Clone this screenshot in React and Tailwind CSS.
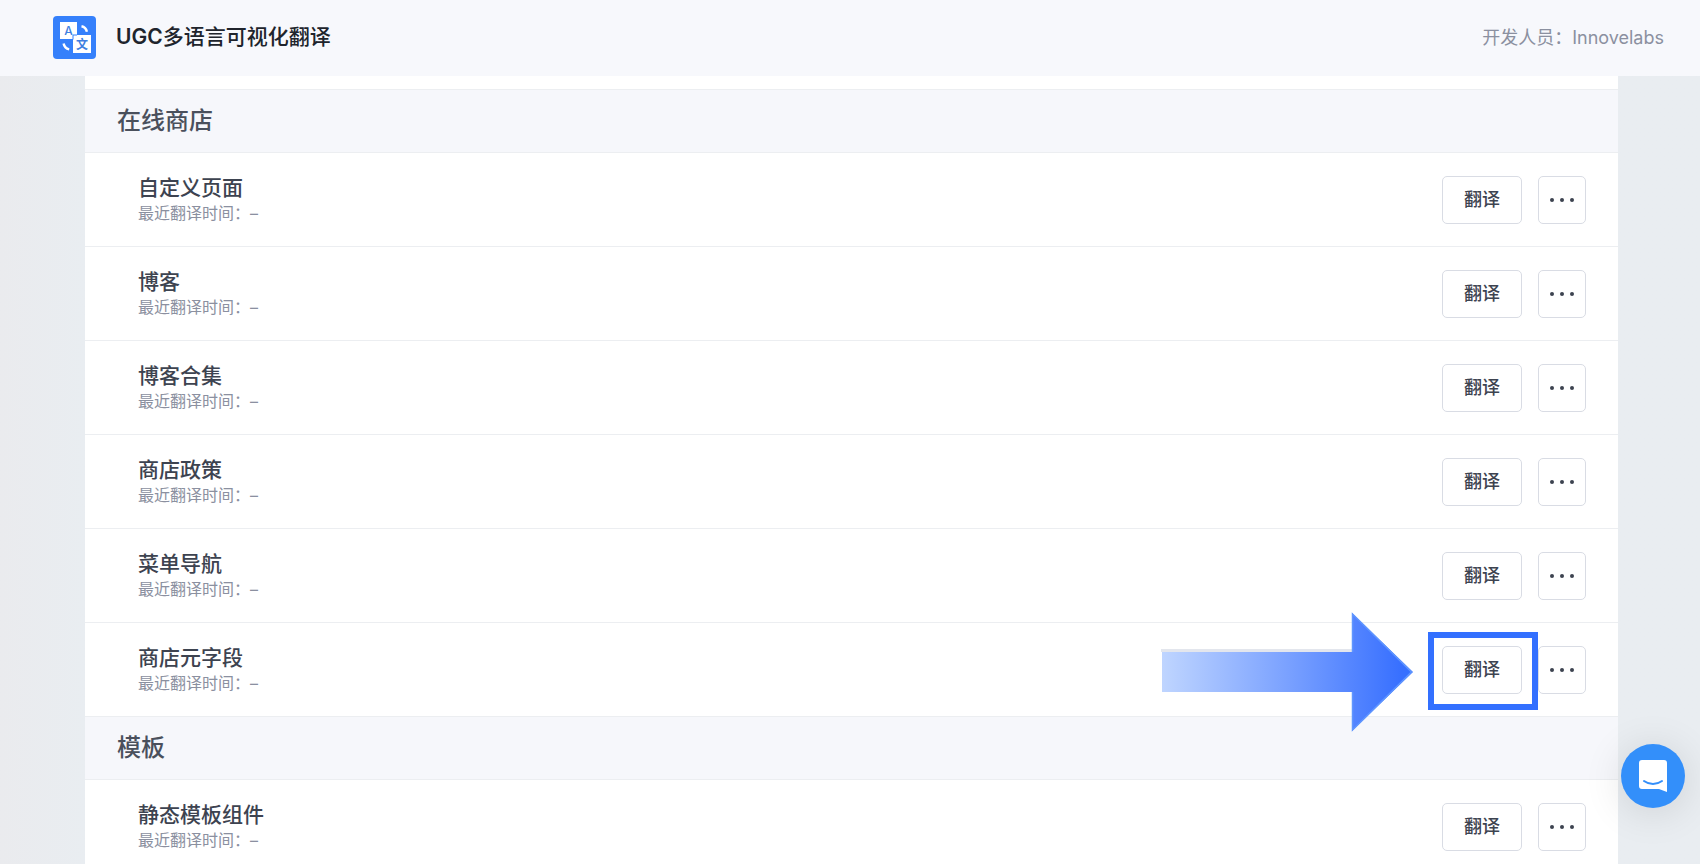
// UGC 多语言可视化翻译：资源列表页
import React from 'react'

const SECTIONS = [
  {
    id: 'store',
    title: '在线商店',
    items: [
      { id: 'page', name: '自定义页面' },
      { id: 'blog', name: '博客' },
      { id: 'blog-collection', name: '博客合集' },
      { id: 'policy', name: '商店政策' },
      { id: 'menu', name: '菜单导航' },
      { id: 'metafield', name: '商店元字段', highlighted: true },
    ],
  },
  {
    id: 'template',
    title: '模板',
    items: [{ id: 'static', name: '静态模板组件' }],
  },
]

function Logo() {
  return (
    <svg className="h-[43px] w-[43px] shrink-0" viewBox="0 0 43 43" aria-hidden="true">
      <rect width="43" height="43" rx="4" fill="#3580fb" />
      <rect x="7" y="6" width="17" height="17" fill="#fff" />
      <rect x="20" y="19" width="18" height="18" fill="#fff" />
      <path d="M20 23.5V19h4" fill="none" stroke="#3580fb" strokeWidth="1" />
      <text x="15.5" y="19" textAnchor="middle" fontSize="12" fontWeight="500" fill="#3f7fe0">A</text>
      <text x="29" y="32.5" textAnchor="middle" fontSize="12" fontWeight="700" fill="#3f7fe0">文</text>
      <path d="M28.5 10.2c3 .6 4.8 2.6 5.4 5.6" fill="none" stroke="#fff" strokeWidth="2.4" />
      <path d="M10.6 27.5c.6 3.2 2.4 5.2 5.6 5.9" fill="none" stroke="#fff" strokeWidth="2.4" />
    </svg>
  )
}

// 引导箭头 + 高亮框
function Highlight() {
  return (
    <>
      <svg className="pointer-events-none absolute -top-[34px] right-[109px] z-10 h-[120px] w-[252px]" viewBox="0 0 252 120" aria-hidden="true">
        <defs>
          <linearGradient id="arrow" x1="0" y1="0" x2="1" y2="0">
            <stop offset="0" stopColor="#bfd5ff" />
            <stop offset="0.5" stopColor="#7aa1ff" />
            <stop offset="0.95" stopColor="#3870ff" />
            <stop offset="1" stopColor="#3370ff" />
          </linearGradient>
        </defs>
        <path d="M0 38.5h191" stroke="#e3e6ed" strokeWidth="3" />
        <path d="M1 40h190V1l61 59-61 59V80H1z" fill="url(#arrow)" />
        <path d="M191.5 40V2l59 58-59 58V80" fill="none" stroke="#5f96ff" strokeWidth="1.5" />
      </svg>
      <span className="pointer-events-none absolute -top-3.5 -right-4 -bottom-4 -left-3.5 z-10 border-6 border-[#3370ff]" />
    </>
  )
}

function ItemRow({ item }) {
  return (
    <li className="flex h-[94px] items-center justify-between border-b border-[#eceef1] pr-8 pl-[53px]">
      <div className="pb-0.5">
        <h3 className="text-[21px] leading-7 font-medium text-[#3d4350]">{item.name}</h3>
        <p className="text-base leading-[22px] text-[#8b90a0]">最近翻译时间：–</p>
      </div>
      <div className="flex gap-4">
        <div className="relative">
          <button type="button" className="h-12 w-20 rounded-[5px] border border-[#d9dce4] bg-white text-[18px] font-medium text-[#3d4350]">
            翻译
          </button>
          {item.highlighted && <Highlight />}
        </div>
        <button type="button" aria-label="更多操作" className="flex h-12 w-12 items-center justify-center gap-1.5 rounded-[5px] border border-[#d9dce4] bg-white">
          <i className="h-1 w-1 rounded-full bg-[#3d4350]" />
          <i className="h-1 w-1 rounded-full bg-[#3d4350]" />
          <i className="h-1 w-1 rounded-full bg-[#3d4350]" />
        </button>
      </div>
    </li>
  )
}

export default function App() {
  return (
    <div className="flex h-screen flex-col overflow-hidden bg-[#e9ecf1] font-['Inter','Noto_Sans_CJK_SC',sans-serif]">
      <header className="flex h-[76px] shrink-0 items-center justify-between bg-[#f7f8fc] pr-9 pb-0.5 pl-[53px]">
        <div className="flex items-center gap-5">
          <Logo />
          <h1 className="text-[21px] font-medium text-[#20242c]">
            <span className="font-semibold">UGC</span>多语言可视化翻译
          </h1>
        </div>
        <p className="text-[18px] text-[#8b90a0]">开发人员：Innovelabs</p>
      </header>

      <div className="min-h-0 flex-1 overflow-hidden bg-linear-to-r from-[#eaebee] to-[#e9edf1] to-5% pr-[82px] pl-[85px]">
        <main className="min-h-full bg-white pt-[13px]">
          <div className="border-t border-[#eceef1]">
            {SECTIONS.map(s => (
              <section key={s.id}>
                <h2 className="flex h-[63px] items-center border-b border-[#eceef1] bg-[#f6f7fb] px-8 text-[24px] font-medium text-[#4a505c]">
                  {s.title}
                </h2>
                <ul>
                  {s.items.map(item => <ItemRow key={item.id} item={item} />)}
                </ul>
              </section>
            ))}
          </div>
        </main>
      </div>

      <button type="button" aria-label="在线客服" className="fixed right-[15px] bottom-14 flex h-16 w-16 items-center justify-center rounded-full bg-[#338ffa] shadow-[0_4px_40px_rgba(0,0,0,0.12)]">
        <svg className="h-8 w-7" viewBox="0 0 28 32" aria-hidden="true">
          <path d="M3 0h22a3 3 0 0 1 3 3v29l-8-3H3a3 3 0 0 1-3-3V3a3 3 0 0 1 3-3z" fill="#fff" />
          <path d="M5 21c5.5 4 12.5 4 18 0" fill="none" stroke="#338ffa" strokeWidth="2" strokeLinecap="round" />
        </svg>
      </button>
    </div>
  )
}
